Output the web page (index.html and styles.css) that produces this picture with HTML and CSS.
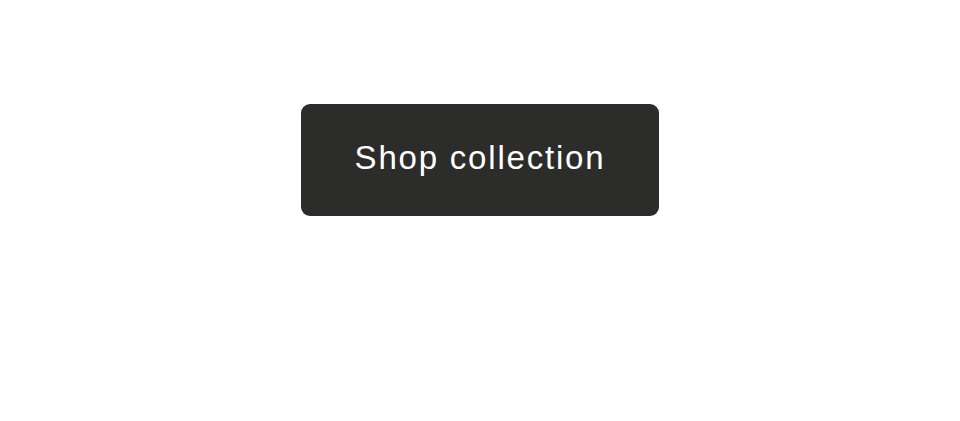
FILE: index.html
```html
<!DOCTYPE html>
<html lang="en">
    <head>
        <meta charset="UTF-8">
        <meta name="viewport" content="width=device-width, initial-scale=1.0">
        <title>Shop</title>
        <link rel="stylesheet" href="styles.css">
    </head>
    <body>
        <div class="container">
            <a class="button" href="#">Shop collection</a>
        </div>
    </body>
</html>
```

FILE: styles.css
```css
* {
    margin: 0;
    padding: 0;
    box-sizing: border-box;
}

body {
    background: #fff;
    font-family: "Liberation Sans", Arial, sans-serif;
}

.container {
    display: flex;
    justify-content: center;
    padding-top: 104px;
}

.button {
    display: flex;
    align-items: center;
    justify-content: center;
    width: 358px;
    height: 112px;
    padding-bottom: 5px;
    border-radius: 9px;
    background: #2c2c2b;
    color: #fff;
    font-size: 33px;
    letter-spacing: 1.8px;
    text-decoration: none;
}
```
